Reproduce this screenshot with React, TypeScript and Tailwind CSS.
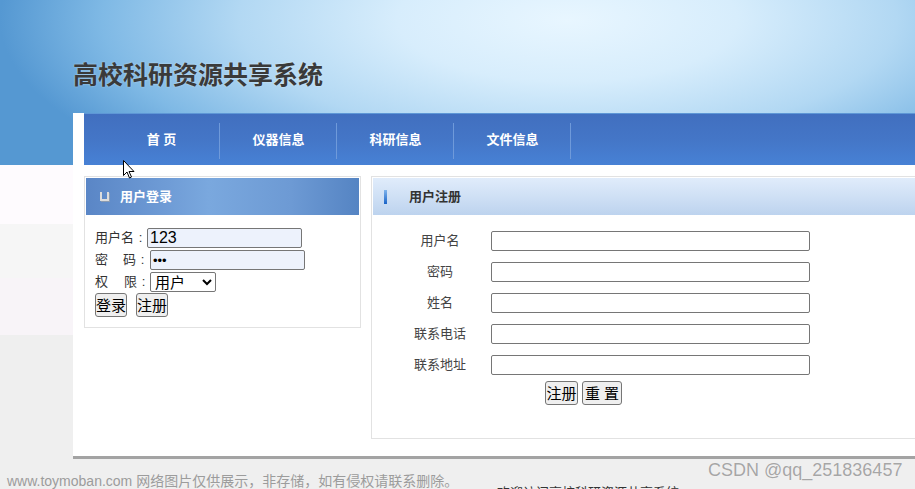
import React from 'react';

const navItems = ['首 页', '仪器信息', '科研信息', '文件信息'];
const regRows = ['用户名', '密码', '姓名', '联系电话', '联系地址'];

function Colon() {
  return <span className="w-[13px] text-center">:</span>;
}

export default function App() {
  return (
    <div className="relative w-[915px] h-[489px] overflow-hidden bg-[#efefef] font-['Liberation_Sans','Noto_Sans_CJK_SC',sans-serif]">
      {/* Banner */}
      <header className="h-[165px] flex flex-col bg-[radial-gradient(ellipse_62%_125%_at_62%_12%,#e8f6ff_0%,#d7edfc_30%,#b2d8f3_58%,#7fb9e5_82%,#5598d2_100%)]">
        <div className="h-[113px] pl-[73px] pt-[59px]">
          <h1 className="text-[25px] leading-[32px] font-bold text-[#3a3a3a] [text-shadow:0_0_2px_rgba(255,255,255,0.5)]">
            高校科研资源共享系统
          </h1>
        </div>
        <div className="ml-[73px] w-[1000px] h-[52px] flex bg-white pl-[11px]">
          <nav className="flex-1 flex pl-[19px] border-t border-[#5e97d6] bg-[linear-gradient(to_bottom,#416fbf,#4476c7_50%,#4781d5)]">
            {navItems.map((item) => (
              <div key={item} className="w-[117px] flex items-center justify-center relative">
                <span className="text-[13px] font-bold text-white whitespace-pre">{item}</span>
                <span className="absolute right-0 top-[9px] h-[36px] w-px bg-[#6f9ada]" />
              </div>
            ))}
          </nav>
        </div>
      </header>

      {/* Body */}
      <div className="flex">
        <div className="w-[73px] shrink-0 flex flex-col">
          <div className="h-[59px] bg-[#fefbfe]" />
          <div className="h-[54px] bg-[#f6f6f6]" />
          <div className="h-[57px] bg-[#f8f4f8]" />
        </div>
        <main className="w-[1000px] shrink-0 h-[294px] bg-white border-b-[3px] border-[#a3a3a3] pt-[11px] pl-[11px] flex items-start">
          {/* Login panel */}
          <section className="w-[277px] h-[152px] border border-[#e2e2e2] p-px shrink-0">
            <div className="h-[37px] flex items-center pl-[14px] bg-[linear-gradient(to_right,#5a86c6,#6f9cd6_30%,#7aa8de_45%,#6d9ad4_75%,#5584c3)]">
              <span className="w-[9px] h-[9px] border-[2px] border-t-0 border-[#dcdcdc] shadow-[1px_1px_0_#8a9ab0]" />
              <span className="ml-[11px] text-[13px] font-bold text-white">用户登录</span>
            </div>
            <div className="pl-[9px] pt-[12px] text-[13px] text-[#333]">
              <div className="h-[22px] flex items-center">
                <span className="w-[52px] flex">
                  <span>用户名</span>
                  <Colon />
                </span>
                <input
                  readOnly
                  value="123"
                  className="w-[155px] h-[20px] border border-[#767676] rounded-[2px] bg-[#edf2fc] px-[2px] text-[16px] text-black font-['Liberation_Sans',sans-serif] outline-none"
                />
              </div>
              <div className="h-[22px] flex items-center">
                <span className="w-[55px] flex">
                  <span>密</span>
                  <span className="ml-[15px]">码</span>
                  <Colon />
                </span>
                <input
                  readOnly
                  type="password"
                  value="123"
                  className="w-[155px] h-[20px] border border-[#767676] rounded-[2px] bg-[#edf2fc] px-[2px] text-[13px] text-black outline-none"
                />
              </div>
              <div className="h-[22px] flex items-center">
                <span className="w-[55px] flex">
                  <span>权</span>
                  <span className="ml-[16px]">限</span>
                  <Colon />
                </span>
                <select className="w-[66px] h-[20px] border border-[#767676] rounded-[2px] bg-white text-[15px] text-black leading-[18px]">
                  <option>用户</option>
                </select>
              </div>
              <div className="h-[24px] flex items-center gap-[9px]">
                <button className="w-[32px] h-[24px] px-0 border border-[#767676] rounded-[3px] bg-[#efefef] text-[15px] text-black leading-none">登录</button>
                <button className="w-[32px] h-[24px] px-0 border border-[#767676] rounded-[3px] bg-[#efefef] text-[15px] text-black leading-none">注册</button>
              </div>
            </div>
          </section>

          {/* Register panel */}
          <section className="ml-[10px] w-[700px] h-[263px] border border-[#e2e2e2] p-px shrink-0">
            <div className="h-[37px] flex items-center pl-[11px] bg-[linear-gradient(to_bottom,#e0ecfb,#cfe0f5_50%,#bdd3ee)]">
              <span className="w-[3px] h-[14px] bg-[linear-gradient(to_bottom,#7fb4ec,#1a64c8)]" />
              <span className="ml-[22px] text-[13px] font-bold text-[#333]">用户注册</span>
            </div>
            <div className="pt-[16px] flex flex-col gap-[11px]">
              {regRows.map((label) => (
                <div key={label} className="h-[20px] flex items-center pl-[16px]">
                  <span className="w-[102px] text-center text-[13px] text-[#444]">{label}</span>
                  <input readOnly className="w-[319px] h-[20px] border border-[#767676] rounded-[2px] bg-white outline-none" />
                </div>
              ))}
            </div>
            <div className="mt-[6px] pl-[172px] flex gap-[4px]">
              <button className="w-[33px] h-[24px] px-0 border border-[#767676] rounded-[3px] bg-[#efefef] text-[15px] text-black leading-none">注册</button>
              <button className="w-[40px] h-[24px] px-0 border border-[#767676] rounded-[3px] bg-[#efefef] text-[15px] text-black leading-none whitespace-pre">重 置</button>
            </div>
          </section>
        </main>
      </div>

      {/* Footer */}
      <footer className="pl-[497px] pt-[26px] text-[13px] leading-[16px] text-[#333]">
        欢迎访问高校科研资源共享系统
      </footer>

      {/* Watermarks */}
      <div className="absolute left-[7px] top-[472px] text-[14px] leading-[18px] text-[#9c9c9c]">
        www.toymoban.com 网络图片仅供展示，非存储，如有侵权请联系删除。
      </div>
      <div className="absolute left-[708px] top-[459px] text-[18px] leading-[22px] text-[#a6a6a6] [text-shadow:0_0_1px_#ffffff]">
        CSDN @qq_251836457
      </div>

      {/* Mouse pointer */}
      <svg className="absolute left-[123px] top-[160px]" width="12" height="19" viewBox="0 0 12 19">
        <path d="M0.5 0.5 L0.5 15.5 L4 12 L6.5 18 L8.5 17 L6 11.5 L11 11.5 Z" fill="#ffffff" stroke="#000000" strokeWidth="1" />
      </svg>
    </div>
  );
}
